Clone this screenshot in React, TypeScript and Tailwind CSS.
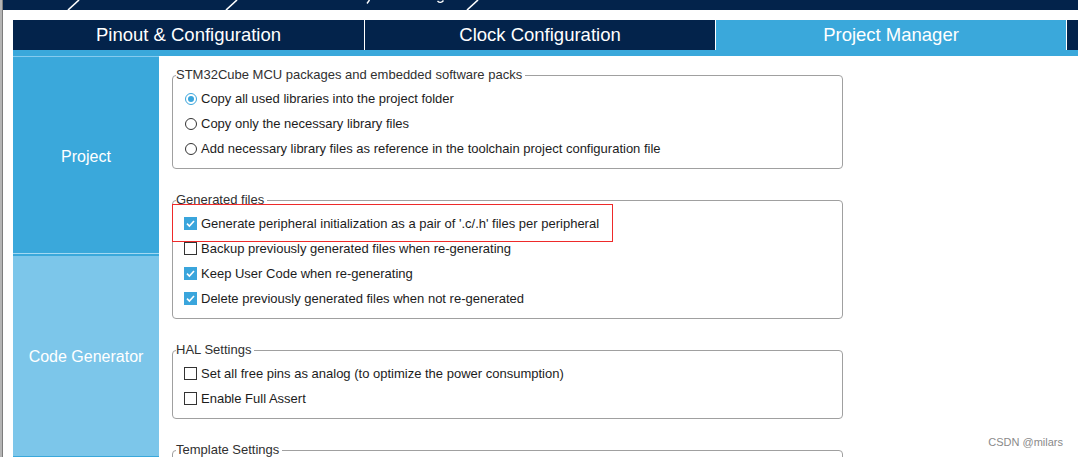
import React from "react";

const NAVY = "bg-[#03234b]";

function Check({ checked }: { checked: boolean }) {
  return checked ? (
    <span className="w-[13px] h-[13px] bg-[#3aa5dc] flex items-center justify-center shrink-0">
      <svg width="13" height="13" viewBox="0 0 13 13">
        <polyline points="3,6.6 5.4,9 10,4" fill="none" stroke="#ffffff" strokeWidth="1.6" />
      </svg>
    </span>
  ) : (
    <span className="w-[13px] h-[13px] border border-[#333333] bg-white shrink-0" />
  );
}

function Radio({ checked }: { checked: boolean }) {
  return (
    <span className="w-[13px] h-[13px] flex items-center justify-center shrink-0">
      <span
        className={
          checked
            ? "w-[12px] h-[12px] rounded-full border border-[#3aa5dc] bg-white flex items-center justify-center"
            : "w-[12px] h-[12px] rounded-full border border-[#333333] bg-white"
        }
      >
        {checked && <span className="w-[6px] h-[6px] rounded-full bg-[#3aa5dc]" />}
      </span>
    </span>
  );
}

function Row({ children, control }: { children: React.ReactNode; control: React.ReactNode }) {
  return (
    <div className="h-[25px] flex items-center gap-[4px] text-[13px] text-[#1c1c1c] whitespace-nowrap">
      {control}
      <span>{children}</span>
    </div>
  );
}

function Group({ title, children }: { title: string; children?: React.ReactNode }) {
  return (
    <fieldset className="w-[671px] border border-[#a0a0a0] rounded-[4px] pl-[3px] pb-[7px] pt-[4px] m-0">
      <legend className="pr-[3px] pl-[0px] text-[13px] leading-[14px] text-[#303030]">{title}</legend>
      <div className="pl-[8px] flex flex-col">{children}</div>
    </fieldset>
  );
}

export default function App() {
  return (
    <div className="relative w-[1078px] h-[457px] overflow-hidden bg-white flex font-['Liberation_Sans',Arial,sans-serif]">
      <div className="w-[3px] bg-[#b4b4b4] border-r border-[#7c7c7c] shrink-0" />
      <div className="flex-1 flex flex-col">
        <div className={`h-[10px] ${NAVY} relative shrink-0`}>
          <svg className="absolute left-0 top-0" width="1075" height="10" viewBox="3 0 1075 10">
            <line x1="68" y1="10" x2="79" y2="0" stroke="#ffffff" strokeWidth="1.6" />
            <line x1="226" y1="10" x2="237" y2="0" stroke="#ffffff" strokeWidth="1.6" />
            <line x1="467" y1="10" x2="478" y2="0" stroke="#ffffff" strokeWidth="1.6" />
            <line x1="367" y1="3.5" x2="369.5" y2="0" stroke="#ffffff" strokeWidth="1.4" />
            <path d="M437.5,1 Q440.5,4 443.5,0.5" fill="none" stroke="#ffffff" strokeWidth="1.4" />
          </svg>
        </div>
        <div className="h-[10px] shrink-0" />
        <div className="pl-[10px] flex flex-col flex-1">
          <div className="h-[30px] flex text-white text-[18.5px] leading-none">
            <div className={`w-[351px] ${NAVY} flex items-center justify-center`}>Pinout &amp; Configuration</div>
            <div className="w-[1px] bg-white" />
            <div className={`w-[350px] ${NAVY} flex items-center justify-center`}>Clock Configuration</div>
            <div className="w-[1px] bg-white" />
            <div className="w-[350px] bg-[#3aa8db] flex items-center justify-center">Project Manager</div>
            <div className="w-[1px] bg-white" />
            <div className={`flex-1 ${NAVY}`} />
          </div>
          <div className="h-[6px] bg-[#3aa8db]" />
          <div className="flex flex-1">
            <div className="w-[146px] flex flex-col text-white text-[16px] shrink-0">
              <div className="h-[197px] bg-[#3aa8db] border-t border-[#86cbee] pt-[3px] flex items-center justify-center">Project</div>
              <div className="h-[1px] bg-[#a3d8f2]" />
              <div className="h-[2px] bg-[#3aa8db]" />
              <div className="h-[200px] bg-[#7cc6ea] pt-[2px] flex items-center justify-center">Code Generator</div>
              <div className="h-[2px] bg-[#3aa8db]" />
            </div>
            <div className="flex-1 pl-[13px] pt-[12px] flex flex-col gap-[24px]">
              <Group title="STM32Cube MCU packages and embedded software packs">
                <Row control={<Radio checked />}>Copy all used libraries into the project folder</Row>
                <Row control={<Radio checked={false} />}>Copy only the necessary library files</Row>
                <Row control={<Radio checked={false} />}>
                  Add necessary library files as reference in the toolchain project configuration file
                </Row>
              </Group>
              <Group title="Generated files">
                <div className="relative">
                  <Row control={<Check checked />}>
                    Generate peripheral initialization as a pair of '.c/.h' files per peripheral
                  </Row>
                  <div className="absolute left-[-12px] top-[-7px] w-[441px] h-[38px] border border-[#ee2a2a] pointer-events-none" />
                </div>
                <Row control={<Check checked={false} />}>Backup previously generated files when re-generating</Row>
                <Row control={<Check checked />}>Keep User Code when re-generating</Row>
                <Row control={<Check checked />}>Delete previously generated files when not re-generated</Row>
              </Group>
              <Group title="HAL Settings">
                <Row control={<Check checked={false} />}>
                  Set all free pins as analog (to optimize the power consumption)
                </Row>
                <Row control={<Check checked={false} />}>Enable Full Assert</Row>
              </Group>
              <Group title="Template Settings">
                <div className="h-[40px]" />
              </Group>
            </div>
          </div>
        </div>
      </div>
      <div className="absolute right-[15px] top-[435px] text-[11px] leading-[14px] text-[#8a8a8a]">CSDN @milars</div>
    </div>
  );
}
